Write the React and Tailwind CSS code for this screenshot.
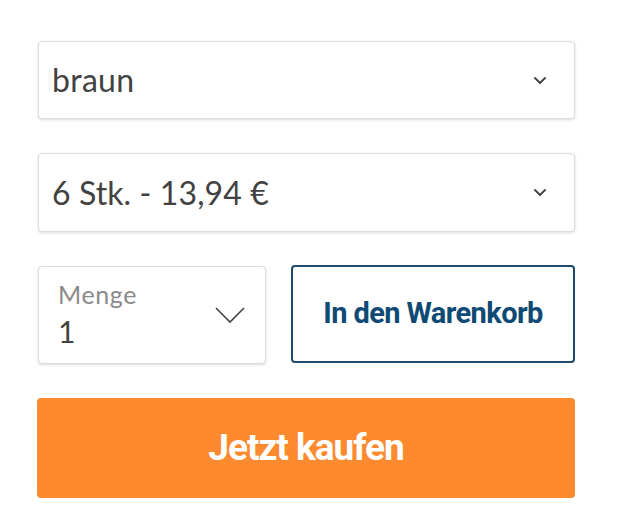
export default function App() {
  const chevronSmall = (
    <svg width="14" height="9" viewBox="0 0 14 9" fill="none" className="shrink-0">
      <path d="M2 2l5 5 5-5" stroke="#444" strokeWidth="2" strokeLinecap="round" strokeLinejoin="round" />
    </svg>
  );
  return (
    <div className="min-h-[530px] w-[618px] bg-white pt-[41px] pl-[38px] font-['Lato',sans-serif]">
      <div className="flex w-[537px] flex-col">
        <div className="flex h-[78px] items-center justify-between rounded-[4px] border border-[#dcdcdc] bg-white pl-[13px] pr-[27px] shadow-[0_1px_3px_rgba(0,0,0,0.15)]">
          <span className="text-[32px] tracking-[0.3px] text-[#424242]">braun</span>
          {chevronSmall}
        </div>
        <div className="mt-[34px] flex h-[79px] items-center justify-between rounded-[4px] border border-[#dcdcdc] bg-white pl-[13px] pr-[27px] shadow-[0_1px_3px_rgba(0,0,0,0.15)]">
          <span className="text-[32px] tracking-[0.1px] text-[#424242]">6 Stk. - 13,94 €</span>
          {chevronSmall}
        </div>
        <div className="mt-[34px] flex gap-[25px]">
          <div className="flex h-[98px] w-[228px] items-center justify-between rounded-[4px] border border-[#dcdcdc] bg-white pl-[19px] pr-[19px] shadow-[0_1px_3px_rgba(0,0,0,0.15)]">
            <div className="-mt-[2px] flex flex-col leading-none">
              <span className="text-[25px] tracking-[0.6px] text-[#8a8a8a]">Menge</span>
              <span className="mt-[9px] text-[30px] text-[#424242]">1</span>
            </div>
            <svg width="32" height="18" viewBox="0 0 32 18" fill="none">
              <path d="M2 2l14 14 14-14" stroke="#444" strokeWidth="1.6" />
            </svg>
          </div>
          <button className="-mt-[1px] flex h-[98px] flex-1 items-center justify-center rounded-[4px] border-2 border-[#1d4a68] bg-white font-['Roboto',sans-serif] text-[29px] font-bold tracking-[-0.6px] text-[#0e4a74]">
            In den Warenkorb
          </button>
        </div>
        <button className="mt-[34px] flex h-[100px] w-[538px] -ml-[1px] items-center justify-center rounded-[4px] bg-[#fd8a2f] font-['Roboto',sans-serif] text-[37px] font-bold tracking-[-1px] text-white">
          Jetzt kaufen
        </button>
      </div>
    </div>
  );
}
